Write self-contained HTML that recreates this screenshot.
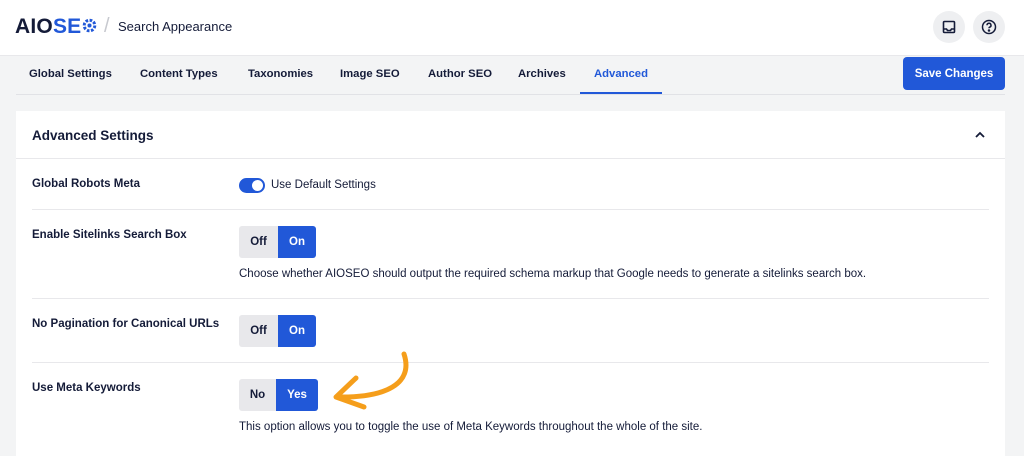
<!DOCTYPE html><html><head><style>
*{margin:0;padding:0;box-sizing:border-box}
body{width:1024px;height:450px;overflow:hidden;background:#f3f4f5;font-family:"Liberation Sans",sans-serif;color:#141b38;position:relative}
.a{position:absolute}
.hdr{left:0;top:0;width:1024px;height:56px;background:#fff;border-bottom:1px solid #e8e8eb}
.tab{top:68px;font-size:11.3px;font-weight:bold;color:#141b38}
.card{left:16px;top:111px;width:989px;height:345px;background:#fff}
.lbl{font-size:11.5px;font-weight:bold;left:32px}
.sep{left:32px;width:957px;height:1px;background:#e8e8eb}
.btn{height:32px;font-size:11.5px;font-weight:bold;display:flex;align-items:center;justify-content:center}
.g{background:#e8e8eb;color:#141b38;border-radius:3px 0 0 3px}
.b{background:#2158d8;color:#fff;border-radius:0 3px 3px 0}
.desc{font-size:11.5px;color:#141b38;left:239px}
</style></head><body>
<div class="a hdr"></div>
<div class="a" style="left:15px;top:15px;font-size:21px;font-weight:900;letter-spacing:0.2px;color:#141b38">AIO<span style="color:#2158d8">SE</span></div>
<svg class="a" style="left:82px;top:18px" width="15" height="15" viewBox="0 0 17 17"><circle cx="8.5" cy="8.5" r="6" fill="none" stroke="#2158d8" stroke-width="3.4" stroke-dasharray="3 1.7"/><circle cx="8.5" cy="8.5" r="2.3" fill="#2158d8"/></svg>
<div class="a" style="left:104px;top:15px;font-size:20px;color:#c7c9cf">/</div>
<div class="a" style="left:118px;top:19px;font-size:13px;color:#141b38">Search Appearance</div>
<div class="a" style="left:933px;top:11px;width:32px;height:32px;border-radius:50%;background:#eeeff1"></div>
<svg class="a" style="left:942px;top:20px" width="14" height="14" viewBox="0 0 14 14" fill="none" stroke="#141b38" stroke-width="1.6"><rect x="1.5" y="1.5" width="11" height="11" rx="1"/><path d="M1.5 9h3l1 1.5h3l1-1.5h3"/></svg>
<div class="a" style="left:973px;top:11px;width:32px;height:32px;border-radius:50%;background:#eeeff1"></div>
<svg class="a" style="left:981px;top:19px" width="16" height="16" viewBox="0 0 16 16" fill="none" stroke="#141b38" stroke-width="1.5"><circle cx="8" cy="8" r="6.5"/><path d="M6 6.3a2 2 0 1 1 2.6 1.9c-.5.2-.6.6-.6 1.1"/><circle cx="8" cy="11.5" r=".5" fill="#141b38"/></svg>
<div class="a tab" style="left:29px">Global Settings</div>
<div class="a tab" style="left:140px">Content Types</div>
<div class="a tab" style="left:248px">Taxonomies</div>
<div class="a tab" style="left:340px">Image SEO</div>
<div class="a tab" style="left:428px">Author SEO</div>
<div class="a tab" style="left:518px">Archives</div>
<div class="a tab" style="left:594px;color:#2158d8">Advanced</div>
<div class="a" style="left:580px;top:92px;width:82px;height:2px;background:#2158d8"></div>
<div class="a" style="left:16px;top:94px;width:989px;height:1px;background:#e1e2e6"></div>
<div class="a btn" style="left:903px;top:57px;width:102px;height:33px;background:#2158d8;color:#fff;border-radius:4px;font-size:11.5px">Save Changes</div>
<div class="a card"></div>
<div class="a" style="left:32px;top:128px;font-size:13.5px;font-weight:bold">Advanced Settings</div>
<svg class="a" style="left:974px;top:130px" width="12" height="10" viewBox="0 0 12 10"><path d="M2 7l4-4 4 4" fill="none" stroke="#141b38" stroke-width="1.8"/></svg>
<div class="a" style="left:16px;top:158px;width:989px;height:1px;background:#e8e8eb"></div>
<div class="a lbl" style="top:178px">Global Robots Meta</div>
<div class="a" style="left:239px;top:178px;width:26px;height:15px;border-radius:8px;background:#2158d8"></div>
<div class="a" style="left:252px;top:180px;width:11px;height:11px;border-radius:50%;background:#fff"></div>
<div class="a" style="left:271px;top:179px;font-size:11.5px">Use Default Settings</div>
<div class="a sep" style="top:209px"></div>
<div class="a lbl" style="top:229px">Enable Sitelinks Search Box</div>
<div class="a btn g" style="left:239px;top:226px;width:39px">Off</div>
<div class="a btn b" style="left:278px;top:226px;width:38px">On</div>
<div class="a desc" style="top:268px">Choose whether AIOSEO should output the required schema markup that Google needs to generate a sitelinks search box.</div>
<div class="a sep" style="top:298px"></div>
<div class="a lbl" style="top:318px">No Pagination for Canonical URLs</div>
<div class="a btn g" style="left:239px;top:315px;width:39px">Off</div>
<div class="a btn b" style="left:278px;top:315px;width:38px">On</div>
<div class="a sep" style="top:362px"></div>
<div class="a lbl" style="top:382px">Use Meta Keywords</div>
<div class="a btn g" style="left:239px;top:379px;width:37px">No</div>
<div class="a btn b" style="left:276px;top:379px;width:42px">Yes</div>
<div class="a desc" style="top:421px">This option allows you to toggle the use of Meta Keywords throughout the whole of the site.</div>
<svg class="a" style="left:0;top:0" width="1024" height="450"><g fill="none" stroke="#f59e1b" stroke-width="5" stroke-linecap="round" stroke-linejoin="round"><path d="M404 354C414 384 385 398 337 397"/><path d="M356 378L336 397L364 407"/></g></svg>
</body></html>
